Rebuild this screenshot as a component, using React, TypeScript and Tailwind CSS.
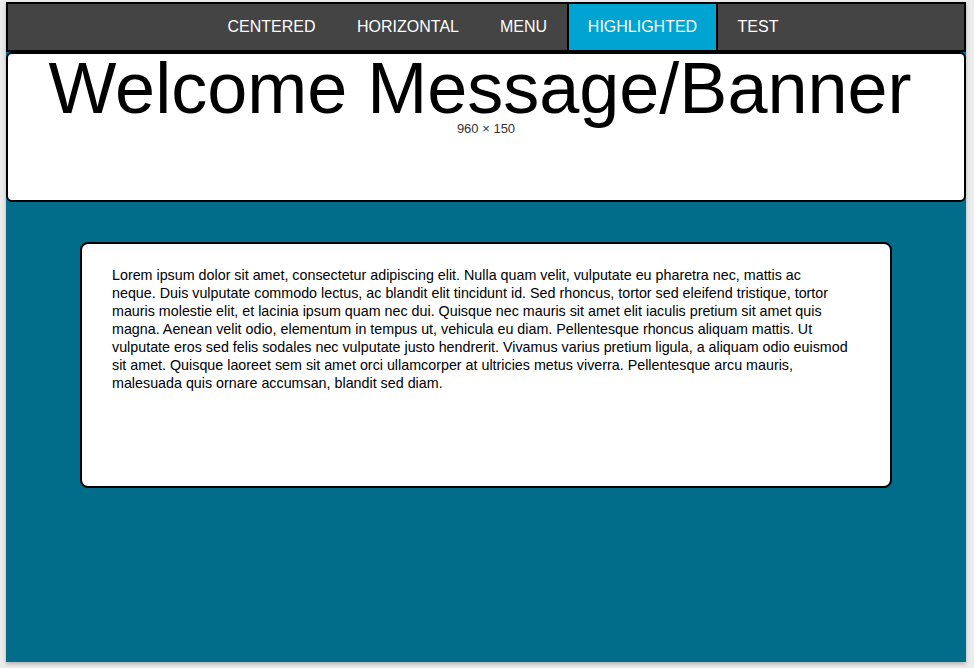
import React from 'react';

const menuItems = [
  { label: 'Centered', w: 'w-[129px]' },
  { label: 'Horizontal', w: 'w-[144px]' },
  { label: 'Menu', w: 'w-[87px]' },
  { label: 'Highlighted', w: 'w-[151px]', active: true },
  { label: 'Test', w: 'w-[80px]' },
];

const lines = [
  'Lorem ipsum dolor sit amet, consectetur adipiscing elit. Nulla quam velit, vulputate eu pharetra nec, mattis ac',
  'neque. Duis vulputate commodo lectus, ac blandit elit tincidunt id. Sed rhoncus, tortor sed eleifend tristique, tortor',
  'mauris molestie elit, et lacinia ipsum quam nec dui. Quisque nec mauris sit amet elit iaculis pretium sit amet quis',
  'magna. Aenean velit odio, elementum in tempus ut, vehicula eu diam. Pellentesque rhoncus aliquam mattis. Ut',
  'vulputate eros sed felis sodales nec vulputate justo hendrerit. Vivamus varius pretium ligula, a aliquam odio euismod',
  'sit amet. Quisque laoreet sem sit amet orci ullamcorper at ultricies metus viverra. Pellentesque arcu mauris,',
  'malesuada quis ornare accumsan, blandit sed diam.',
];

const App: React.FC = () => {
  return (
    <div className="min-h-screen bg-[#ececec] pt-[2px] pl-[6px]" style={{ fontFamily: '"Liberation Sans", Arial, sans-serif' }}>
      <div className="w-[960px] h-[660px] bg-[#016d8b] shadow-[0_2px_4px_rgba(0,0,0,0.25)]">
        {/* Nav */}
        <nav className="h-[50px] border-2 border-black bg-[#444444]">
          <ul className="flex h-full pl-[199px]">
            {menuItems.map((item) => (
              <li
                key={item.label}
                className={
                  item.active
                    ? `${item.w} flex items-center justify-center bg-[#00a4d2] border-x-2 border-black text-white text-[16px] uppercase`
                    : `${item.w} flex items-center justify-center text-white text-[16px] uppercase`
                }
              >
                {item.label}
              </li>
            ))}
          </ul>
        </nav>

        {/* Banner */}
        <div className="h-[150px] bg-white border-2 border-black rounded-md text-center">
          <h1 className="text-[72px] leading-[68px] text-black pr-[12px]">Welcome Message/Banner</h1>
          <p className="text-[13px] text-[#333] leading-[14px]">960 × 150</p>
        </div>

        {/* Content */}
        <div className="px-[74px] pt-[40px]">
          <div className="h-[246px] bg-white border-2 border-black rounded-lg px-[30px] pt-[22px]">
            <p className="text-[14.3px] leading-[18px] text-black whitespace-nowrap">
              {lines.map((line, i) => (
                <React.Fragment key={i}>
                  {line}
                  {i < lines.length - 1 && <br />}
                </React.Fragment>
              ))}
            </p>
          </div>
        </div>
      </div>
    </div>
  );
};

export default App;
